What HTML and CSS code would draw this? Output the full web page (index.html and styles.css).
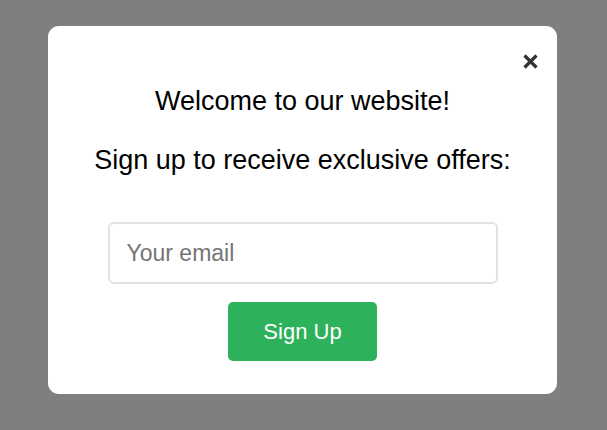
FILE: index.html
```html
<!DOCTYPE html>
<html>
<head>
<meta charset="utf-8">
<link rel="stylesheet" href="styles.css">
</head>
<body>
<div class="overlay">
  <div class="modal">
    <button class="close" aria-label="Close">
      <svg width="15" height="15" viewBox="0 0 15 15"><path d="M1.5 1.5 L13.5 13.5 M13.5 1.5 L1.5 13.5" stroke="#333" stroke-width="3.2" stroke-linecap="butt"/></svg>
    </button>
    <p class="title">Welcome to our website!</p>
    <p class="subtitle">Sign up to receive exclusive offers:</p>
    <input class="email" type="email" placeholder="Your email">
    <button class="signup">Sign Up</button>
  </div>
</div>
</body>
</html>
```
FILE: styles.css
```css
html, body {
  margin: 0;
  padding: 0;
  height: 100%;
}
body {
  background: #7f7f7f;
  font-family: "Liberation Sans", Arial, sans-serif;
}
.overlay {
  display: flex;
  justify-content: center;
  padding: 26px 50px 0 48px;
}
.modal {
  position: relative;
  box-sizing: border-box;
  width: 509px;
  height: 368px;
  background: #fff;
  border-radius: 11px;
  padding: 60px 0 0;
  display: flex;
  flex-direction: column;
  align-items: center;
}
.close {
  position: absolute;
  top: 28px;
  right: 19px;
  width: 15px;
  height: 15px;
  padding: 0;
  border: 0;
  background: none;
  display: flex;
}
.title, .subtitle {
  margin: 0;
  font-size: 27px;
  line-height: 31px;
  color: #000;
}
.subtitle {
  margin-top: 28px;
}
.email {
  box-sizing: border-box;
  margin-top: 46px;
  width: 390px;
  height: 62px;
  border: 2px solid #e2e2e2;
  border-radius: 6px;
  padding: 0 17px;
  font-family: "Liberation Sans", Arial, sans-serif;
  font-size: 23px;
  color: #333;
  outline: none;
}
.email::placeholder {
  color: #757575;
}
.signup {
  margin-top: 18px;
  width: 149px;
  height: 59px;
  border: 0;
  border-radius: 5px;
  background: #2db15a;
  color: #fff;
  font-family: "Liberation Sans", Arial, sans-serif;
  font-size: 22px;
}
```
